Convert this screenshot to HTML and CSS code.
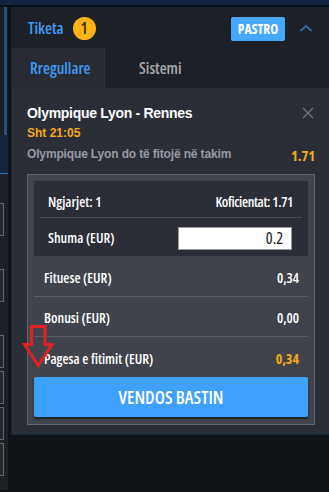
FILE: index.html
```html
<!DOCTYPE html>
<html lang="sq">
<head>
<meta charset="utf-8">
<title>Tiketa</title>
<link rel="stylesheet" href="styles.css">
</head>
<body>
<div class="topbar"></div>
<div class="main">
  <aside class="side">
    <div class="side-top"><span class="scroll"></span></div>
    <div class="side-dots"></div>
    <div class="side-line"></div>
    <div class="side-list">
      <span class="side-btn"></span>
      <span class="side-btn gap"></span>
      <span class="side-btn gap"></span>
      <span class="side-btn"></span>
      <span class="side-btn"></span>
      <span class="side-btn"></span>
    </div>
  </aside>
  <div class="col">
    <section class="slip">
      <header class="slip-head">
        <span class="title">Tiketa</span>
        <span class="badge">1</span>
        <span class="spacer"></span>
        <button class="clear">PASTRO</button>
        <svg class="chev" width="14" height="8" viewBox="0 0 14 8"><path d="M1.5 7 L7 1.8 L12.5 7" fill="none" stroke="#36679a" stroke-width="2"/></svg>
      </header>
      <nav class="tabs">
        <span class="tab active">Rregullare</span>
        <span class="tab">Sistemi</span>
      </nav>
      <div class="body">
        <div class="event">
          <div class="event-top">
            <div>
              <div class="match">Olympique Lyon - Rennes</div>
              <div class="time">Sht 21:05</div>
            </div>
            <svg class="close" width="12" height="12" viewBox="0 0 12 12"><path d="M1 1 L11 11 M11 1 L1 11" stroke="#74777d" stroke-width="1.3"/></svg>
          </div>
          <div class="pick">
            <span class="pick-name">Olympique Lyon do të fitojë në takim</span>
            <span class="odds">1.71</span>
          </div>
        </div>
        <div class="summary">
          <div class="stake">
            <div class="srow first">
              <span>Ngjarjet: 1</span>
              <span class="tight">Koficientat: 1.71</span>
            </div>
            <div class="srow">
              <span>Shuma (EUR)</span>
              <span class="input">0.2</span>
            </div>
          </div>
          <div class="totals">
            <div class="trow line top"><span>Fituese (EUR)</span><span>0,34</span></div>
            <div class="trow line"><span>Bonusi (EUR)</span><span>0,00</span></div>
            <div class="trow"><span>Pagesa e fitimit (EUR)</span><span class="hl">0,34</span></div>
          </div>
          <button class="place">VENDOS BASTIN</button>
        </div>
      </div>
    </section>
  </div>
</div>
<svg class="arrow" width="34" height="46" viewBox="0 0 34 46"><path d="M10.5 2.5 H24 V20.5 H31 L17.2 41.5 L3.5 20.5 H10.5 Z" fill="none" stroke="#e11f25" stroke-width="3" stroke-linejoin="miter"/></svg>
</body>
</html>
```

FILE: styles.css
```css
* { box-sizing: border-box; margin: 0; padding: 0; }
html, body { width: 329px; height: 492px; overflow: hidden; }
body {
  background: #111417;
  font-family: "Liberation Sans", Arial, sans-serif;
  color: #fff;
  position: relative;
}
.topbar {
  height: 7px;
  background: #13233f;
  border-bottom: 2px solid #0b0f16;
}
.main {
  display: flex;
  height: 483px;
}
.side {
  width: 8px;
  display: flex;
  flex-direction: column;
}
.side-top {
  height: 128px;
  padding: 0 1px 0 4px;
  background: #1b1f28;
}
.scroll {
  display: block;
  width: 3px;
  height: 128px;
  background: #2b4f78;
}
.side-dots {
  height: 38px;
  background: #16233a;
}
.side-line {
  height: 1px;
  background: #2a74c4;
}
.side-list {
  display: flex;
  flex-direction: column;
  gap: 3px;
  padding-top: 29px;
  background: #1e2025;
  flex: 1;
}
.side-btn {
  display: block;
  width: 4px;
  height: 33px;
  border: 1px solid #62656b;
  border-left: none;
  background: #25282e;
}
.side-btn.gap { margin-top: 30px; }
.col { flex: 1; display: flex; flex-direction: column; margin-left: 3px; }
.slip {
  background: #2b2e37;
  border-top: 1px solid #0f2433;
  border-left: 1px solid #0f2433;
  border-bottom: 1px solid #0f2a3b;
}
.title, .badge, .clear, .tab, .odds, .summary, .place {
  font-family: "Open Sans", "DejaVu Sans Condensed", sans-serif;
  font-stretch: 75%;
}
.slip-head {
  height: 40px;
  background: #1e2027;
  display: flex;
  align-items: center;
  padding: 0 16px 0 16px;
}
.title {
  font-size: 16px;
  font-weight: 600;
  color: #3e9bf5;
}
.badge {
  width: 23px;
  height: 23px;
  border-radius: 50%;
  background: #fbb415;
  color: #3a2800;
  font-size: 16px;
  font-weight: 600;
  display: flex;
  align-items: center;
  justify-content: center;
  margin-left: 9px;
}
.spacer { flex: 1; }
.clear {
  border: none;
  background: #46a7ff;
  color: #fff;
  font-weight: 700;
  font-size: 13.5px;
  width: 54px;
  height: 24px;
  border-radius: 2px;
  margin-top: 1px;
}
.chev { margin-left: 14px; }
.tabs {
  display: flex;
  height: 40px;
  background: #1e2027;
}
.tab {
  font-size: 16px;
  font-weight: 600;
  color: #a6a8ad;
  display: flex;
  align-items: center;
  padding-left: 34px;
}
.tab.active {
  background: #292c34;
  color: #3e9bf5;
  width: 93px;
  padding-left: 18px;
}
.body {
  padding: 16px 14px 9px 15px;
}
.event-top {
  display: flex;
  justify-content: space-between;
  align-items: flex-start;
}
.match {
  font-size: 14px;
  font-weight: 700;
  letter-spacing: -0.3px;
  line-height: 18px;
  color: #fff;
}
.time {
  font-size: 12px;
  font-weight: 700;
  line-height: 16px;
  color: #f5a81b;
  margin-top: 3px;
}
.close { margin-top: 3px; margin-right: 1px; }
.pick {
  display: flex;
  justify-content: space-between;
  align-items: center;
  margin-top: 5px;
  height: 18px;
}
.pick-name {
  font-size: 12px;
  font-weight: 700;
  letter-spacing: -0.15px;
  color: #989aa1;
  margin-top: -3px;
}
.odds {
  font-size: 14.5px;
  font-weight: 700;
  color: #f5a81b;
}
.summary {
  margin-top: 10px;
  border: 1px solid #62656c;
  background: #40434c;
  padding: 6px 6px 7px;
  font-size: 14px;
  font-weight: 600;
}
.stake {
  background: #2b2e37;
  padding: 0 6px;
}
.srow {
  height: 37px;
  display: flex;
  justify-content: space-between;
  align-items: center;
  padding: 0 9px 0 8px;
}
.srow.first {
  border-bottom: 1px solid #4a4d55;
  padding-top: 4px;
}
.tight { letter-spacing: -0.35px; }
.srow + .srow { height: 38px; padding-right: 10px; }
.input {
  width: 114px;
  height: 23px;
  background: #fff;
  color: #111;
  border: 1px solid #9a9a9a;
  text-align: right;
  padding-right: 8px;
  font-size: 16px;
  font-weight: 500;
  line-height: 21px;
  margin-top: 3px;
}
.trow {
  height: 40px;
  display: flex;
  justify-content: space-between;
  align-items: center;
  padding: 2px 9px 0 10px;
}
.trow.top { height: 41px; }
.trow.line { border-bottom: 1px solid #5a5d65; }
.hl { color: #f5a81b; font-weight: 700; }
.place {
  display: block;
  width: 100%;
  height: 40px;
  border: none;
  border-radius: 2px;
  background: #3fa1fe;
  color: #fff;
  font-size: 18px;
  font-weight: 600;
  box-shadow: 0 2px 2px rgba(0,0,0,0.55);
}
.arrow {
  position: absolute;
  left: 21px;
  top: 324px;
}
```
